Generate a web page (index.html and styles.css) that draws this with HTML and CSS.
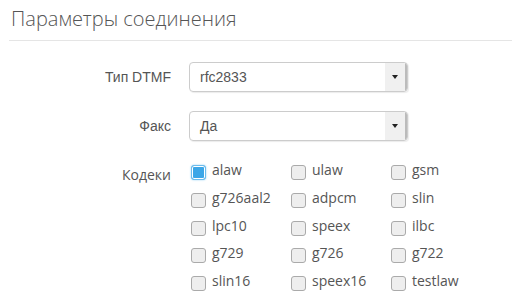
FILE: index.html
```html
<!DOCTYPE html>
<html>

<head>
    <title>Параметры соединения</title>
    <link rel="stylesheet" href="styles.css">
</head>

<body>
    <div class="panel">
        <h2 class="title">Параметры соединения</h2>

        <div class="form">
            <div class="row">
                <label class="row-label">Тип DTMF</label>
                <div class="select">
                    <span class="select-value">rfc2833</span>
                    <span class="select-btn"><span class="caret"></span></span>
                </div>
            </div>

            <div class="row">
                <label class="row-label">Факс</label>
                <div class="select">
                    <span class="select-value">Да</span>
                    <span class="select-btn"><span class="caret"></span></span>
                </div>
            </div>

            <div class="row row-codecs">
                <label class="row-label codecs-label">Кодеки</label>
                <div class="codecs">
                    <label class="codec"><span class="box checked"></span>alaw</label>
                    <label class="codec"><span class="box"></span>ulaw</label>
                    <label class="codec"><span class="box"></span>gsm</label>
                    <label class="codec"><span class="box"></span>g726aal2</label>
                    <label class="codec"><span class="box"></span>adpcm</label>
                    <label class="codec"><span class="box"></span>slin</label>
                    <label class="codec"><span class="box"></span>lpc10</label>
                    <label class="codec"><span class="box"></span>speex</label>
                    <label class="codec"><span class="box"></span>ilbc</label>
                    <label class="codec"><span class="box"></span>g729</label>
                    <label class="codec"><span class="box"></span>g726</label>
                    <label class="codec"><span class="box"></span>g722</label>
                    <label class="codec"><span class="box"></span>slin16</label>
                    <label class="codec"><span class="box"></span>speex16</label>
                    <label class="codec"><span class="box"></span>testlaw</label>
                </div>
            </div>
        </div>
    </div>
</body>

</html>
```

FILE: styles.css
```css
body {
    margin: 0;
    background: #fff;
    color: #555;
    font-family: "Open Sans", sans-serif;
}

.panel {
    width: 503px;
    padding: 0 17px 0 9px;
}

.title {
    margin: 0;
    padding: 5px 0 7px 2px;
    font-size: 20px;
    font-weight: 300;
    line-height: 28px;
    color: #555;
    border-bottom: 1px solid #e5e5e5;
}

.form {
    padding-top: 21px;
}

.row {
    display: grid;
    grid-template-columns: 162px 219px;
    column-gap: 18px;
    align-items: center;
    margin-bottom: 19px;
}

.row-label {
    text-align: right;
    font-family: "Liberation Sans", Arial, sans-serif;
    font-size: 14px;
}

.select {
    display: flex;
    height: 28px;
    border: 1px solid #ccc;
    border-radius: 4px;
    box-shadow: 1px 1px 1px rgba(0, 0, 0, 0.08);
    font-family: "Liberation Sans", Arial, sans-serif;
    font-size: 14px;
    overflow: hidden;
}

.select-value {
    flex: 1;
    padding-left: 10px;
    line-height: 28px;
}

.select-btn {
    width: 20px;
    display: flex;
    align-items: center;
    justify-content: center;
    background: #f0f0f0;
    border-right: 2px solid #bbb;
}

.caret {
    width: 0;
    height: 0;
    border-left: 3px solid transparent;
    border-right: 3px solid transparent;
    border-top: 4px solid #222;
}

.row-codecs {
    align-items: start;
    margin-top: 2px;
}

.codecs-label {
    font-family: "Open Sans", sans-serif;
    padding-top: 5px;
    line-height: 20px;
}

.codecs {
    display: grid;
    grid-template-columns: repeat(3, 100px);
    row-gap: 7.75px;
    margin-left: 2px;
}

.codec {
    display: flex;
    align-items: flex-start;
    font-size: 14px;
    line-height: 20px;
}

.box {
    box-sizing: border-box;
    width: 15px;
    height: 15px;
    margin: 5px 6px 0 0;
    border: 1px solid #aaa;
    border-radius: 3px;
    background: #eee;
}

.box.checked {
    border-color: #6cbcec;
    background: #3ba6e7;
    box-shadow: inset 0 0 0 1px #fff, 0 0 2px #8ccdf3;
}
```
